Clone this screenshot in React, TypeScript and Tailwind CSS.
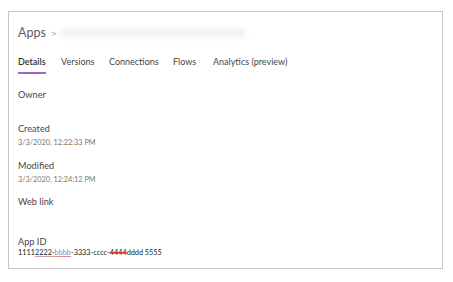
const tabs = [
  { name: 'Details', w: 'w-[43px]' },
  { name: 'Versions', w: 'w-[48px]' },
  { name: 'Connections', w: 'w-[64px]' },
  { name: 'Flows', w: 'w-[40px]' },
  { name: 'Analytics (preview)', w: '' },
];

function Label({ children, className }: { children: React.ReactNode; className?: string }) {
  return <p className={`text-[9.2px] leading-[12px] text-[#484644] ${className ?? ''}`}>{children}</p>;
}

function DateText({ children, className }: { children: React.ReactNode; className?: string }) {
  return <p className={`text-[7.3px] leading-[10px] text-[#797775] ${className ?? ''}`}>{children}</p>;
}

export default function App() {
  return (
    <div className="w-[453px] h-[282px] bg-white pt-[11px] pl-[8px]" style={{ fontFamily: 'Lato, "Noto Sans", sans-serif' }}>
      <div className="w-[435px] h-[258px] border border-[#c8c6c4] pl-[9px]">
        <div className="flex items-center h-[14px] mt-[14px]">
          <span className="text-[12.5px] leading-[14px] text-[#605e5c]">Apps</span>
          <span className="text-[10px] text-[#a19f9d] ml-[5px]">&gt;</span>
          <div className="ml-[4px] h-[10px] w-[185px] bg-[#f2f2f2] rounded-sm blur-[2px]" />
        </div>
        <div className="flex mt-[16px] text-[9px] leading-[12px] text-[#484644]">
          {tabs.map((t, i) => (
            <div key={t.name} className={`${t.w} flex flex-col`}>
              <span className={i === 0 ? 'font-semibold text-[#323130]' : ''}>{t.name}</span>
              {i === 0 && <div className="h-[2px] w-[28px] bg-[#9b6bb8] mt-[4px]" />}
            </div>
          ))}
        </div>
        <Label className="mt-[15px]">Owner</Label>
        <Label className="mt-[22px]">Created</Label>
        <DateText className="mt-[3px]">3/3/2020, 12:22:33 PM</DateText>
        <Label className="mt-[12px]">Modified</Label>
        <DateText className="mt-[3px]">3/3/2020, 12:24:12 PM</DateText>
        <Label className="mt-[11px]">Web link</Label>
        <Label className="mt-[28px]">App ID</Label>
        <p className="text-[7.3px] leading-[10px] text-[#201f1e]">
          1111<span className="underline decoration-[#c4a0a0]">2222-</span>
          <span className="text-[#9a7ab8] underline decoration-[#d98b8b]">bbbb</span>-3333-cccc-
          <span className="line-through decoration-[#d13438]">4444</span>dddd 5555
        </p>
      </div>
    </div>
  );
}
